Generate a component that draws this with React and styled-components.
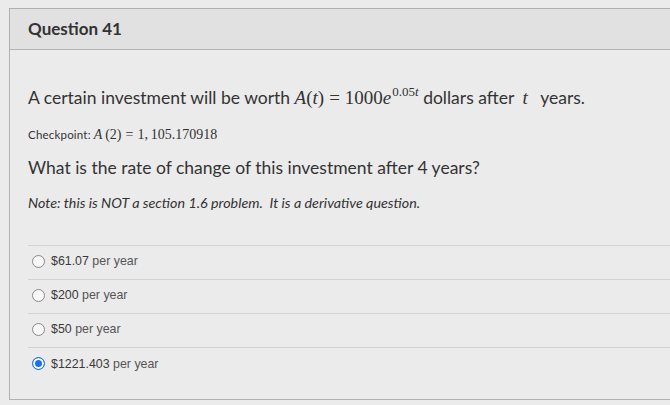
import React from 'react';
import styled, {createGlobalStyle} from 'styled-components';

const GlobalStyle = createGlobalStyle`
    html, body {
        margin: 0;
        padding: 0;
        background: #ebebeb;
        overflow: hidden;
    }
    body {
        font-family: Lato, "Liberation Sans", sans-serif;
        color: #333;
    }
`;

const Page = styled.div`
    padding: 8px 0 0 9px;
    width: 720px;
`;

const Panel = styled.section`
    border: 1px solid #b0b0b0;
    border-right: none;
    background: #ebebeb;
    height: 392px;
    box-sizing: border-box;
`;

const Header = styled.header`
    background: #e1e1e1;
    border-bottom: 1px solid #b4b4b4;
    height: 40px;
    display: flex;
    align-items: center;
    padding-left: 18px;
`;

const Title = styled.h2`
    margin: -1px 0 0;
    font-family: Lato, sans-serif;
    font-weight: 700;
    font-size: 17px;
    color: #333;
`;

const Body = styled.div`
    padding: 35px 0 0 18px;
`;

const Text = styled.p`
    margin: 0 0 ${props => props.gap || 0}px;
    font-size: ${props => props.size || 17.5}px;
    line-height: ${props => props.lh || 26}px;
    font-style: ${props => props.italic ? 'italic' : 'normal'};
    color: #333;
    white-space: nowrap;
`;

const Small = styled.span`
    font-size: 11.5px;
    letter-spacing: 0.2px;
    margin-right: 3px;
`;

const M = styled.span`
    font-family: "Liberation Serif", "DejaVu Serif", serif;
    font-size: ${props => props.size || 19}px;
    font-style: ${props => props.i ? 'italic' : 'normal'};
    margin: 0 ${props => props.pad || 0}px;
`;

const Eq = styled(M)`
    margin: 0 ${props => props.space || 5}px;
`;

const Sup = styled.sup`
    font-family: "Liberation Serif", serif;
    font-size: 13px;
    vertical-align: 8px;
    line-height: 0;
    margin-left: 1px;
`;

const Answers = styled.div`
    margin-top: 32px;
`;

const Row = styled.label`
    display: flex;
    align-items: center;
    gap: 6px;
    height: ${props => props.last ? 52 : 34}px;
    box-sizing: border-box;
    border-top: 1px solid #d3d3d3;
    padding: 0 0 ${props => props.last ? 20 : 3}px 4px;
    font-family: "Liberation Sans", Arial, sans-serif;
    font-size: 12.4px;
`;

const Radio = styled.span`
    width: 11px;
    height: 11px;
    border-radius: 50%;
    border: 1px solid ${props => props.checked ? '#1a73e8' : '#8a8a8a'};
    background: ${props => props.checked ? '#1a73e8' : '#f7f7f7'};
    box-shadow: ${props => props.checked ? 'inset 0 0 0 2px #fff' : 'none'};
    flex: none;
`;

const Amount = styled.span`
    color: #3a3a3a;
`;

const Unit = styled.span`
    color: #555;
`;

const answers = [
    {amount: '$61.07', checked: false},
    {amount: '$200', checked: false},
    {amount: '$50', checked: false},
    {amount: '$1221.403', checked: true},
];

export default function App() {
    return (
        <>
            <GlobalStyle />
            <Page>
                <Panel>
                    <Header>
                        <Title>Question 41</Title>
                    </Header>
                    <Body>
                        <Text gap={12}>
                            A certain investment will be worth <M i>A</M><M>(</M><M i>t</M><M>)</M><Eq>=</Eq><M>1000</M><M i>e</M><Sup>0.05<i>t</i></Sup> dollars after <M i pad={4}>t</M>&nbsp; years.
                        </Text>
                        <Text size={15} lh={20} gap={10}>
                            <Small>Checkpoint:</Small><M i size={14}>A</M><M size={14}>&thinsp;(2)</M><Eq size={14} space={4}>=</Eq><M size={14}>1,&thinsp;105.170918</M>
                        </Text>
                        <Text gap={12}>What is the rate of change of this investment after 4 years?</Text>
                        <Text size={14.3} lh={20} italic>Note: this is NOT a section 1.6 problem.&nbsp; It is a derivative question.</Text>
                        <Answers>
                            {answers.map((a, i) => (
                                <Row key={a.amount} last={i === answers.length - 1}>
                                    <Radio checked={a.checked} />
                                    <span><Amount>{a.amount}</Amount> <Unit>per year</Unit></span>
                                </Row>
                            ))}
                        </Answers>
                    </Body>
                </Panel>
            </Page>
        </>
    );
}
